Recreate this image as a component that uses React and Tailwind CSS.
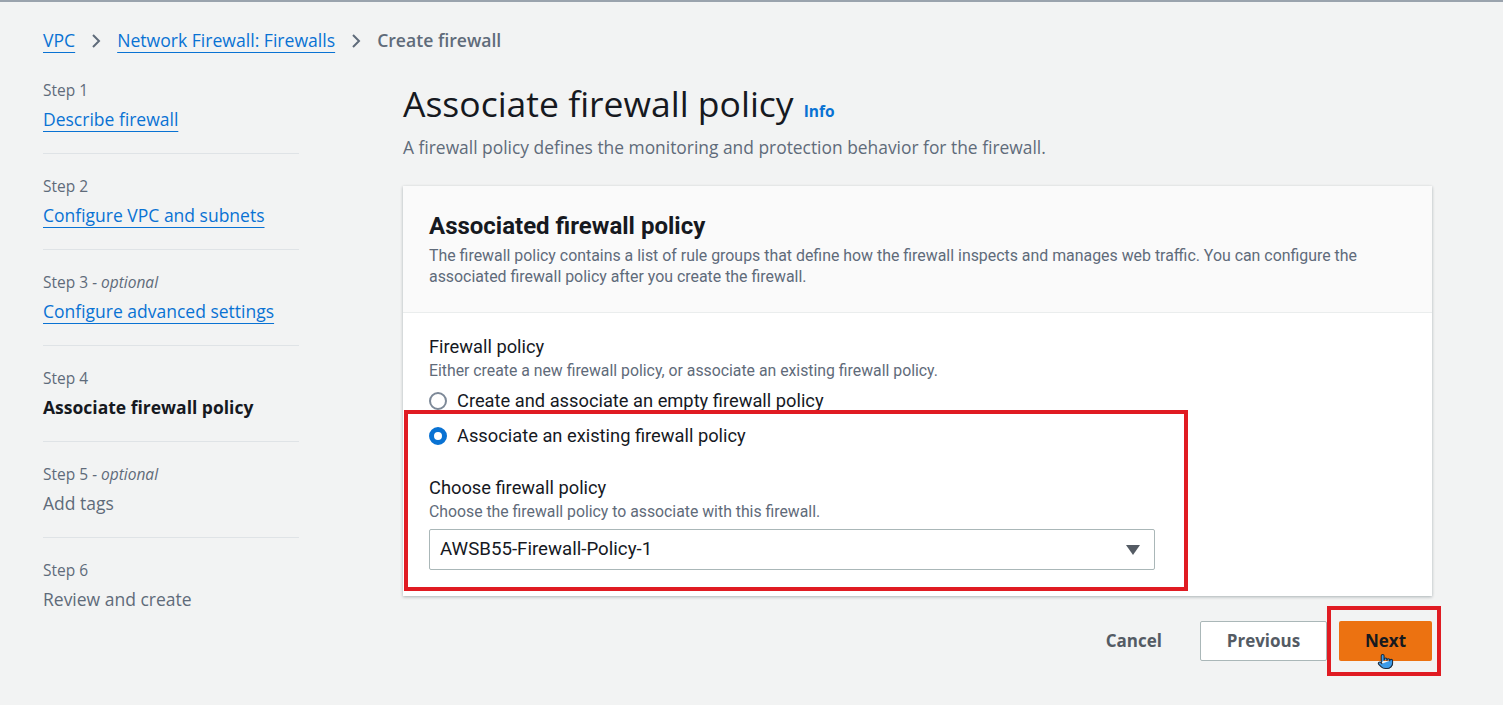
import React from "react";
import { Pointer } from "lucide-react";

const steps = [
  { label: "Step 1", title: "Describe firewall", state: "link" },
  { label: "Step 2", title: "Configure VPC and subnets", state: "link" },
  { label: "Step 3", optional: true, title: "Configure advanced settings", state: "link" },
  { label: "Step 4", title: "Associate firewall policy", state: "active" },
  { label: "Step 5", optional: true, title: "Add tags", state: "todo" },
  { label: "Step 6", title: "Review and create", state: "todo" },
];

function Chevron() {
  return (
    <svg width="14" height="16" viewBox="0 0 14 16" className="mx-[14px]">
      <path d="M4 2l6 6-6 6" fill="none" stroke="#5f6b7a" strokeWidth="2" />
    </svg>
  );
}

function Radio({ checked, label }) {
  return (
    <label className="flex items-center gap-[10px] h-[35px]">
      {checked ? (
        <span className="w-[18px] h-[18px] rounded-full border-[5px] border-[#0972d3] bg-white" />
      ) : (
        <span className="w-[18px] h-[18px] rounded-full border-2 border-[#7d8998] bg-white" />
      )}
      <span className="text-[18.3px] text-[#16191f]">{label}</span>
    </label>
  );
}

export default function App() {
  return (
    <div className="min-h-[705px] bg-[#f2f3f3] border-t-2 border-[#9aa3ad] font-['Open_Sans',sans-serif] relative">
      {/* breadcrumbs */}
      <div className="flex items-center pl-[43px] pt-[25px] h-[52px] text-[17.6px]">
        <span className="text-[#0972d3] underline underline-offset-[5px] decoration-1">VPC</span>
        <Chevron />
        <span className="text-[#0972d3] underline underline-offset-[5px] decoration-1">Network Firewall: Firewalls</span>
        <Chevron />
        <span className="text-[#5f6b7a] font-semibold">Create firewall</span>
      </div>

      <div className="flex mt-[24px]">
        {/* steps nav */}
        <nav className="w-[256px] ml-[43px] shrink-0 mt-[1px]">
          {steps.map((s, i) => (
            <div key={s.label} className={i > 0 ? "pt-[21px] pb-[22px] border-t border-[#dfe3e6]" : "pb-[22px]"}>
              <div className="text-[15.5px] text-[#5f6b7a] leading-[22px]">
                {s.label}
                {s.optional && <span className="italic"> - optional</span>}
              </div>
              <div
                className={`mt-[6px] text-[17.5px] leading-[24px] ${
                  s.state === "link"
                    ? "text-[#0972d3] underline underline-offset-[5px] decoration-1"
                    : s.state === "active"
                    ? "text-[#16191f] font-bold"
                    : "text-[#5f6b7a]"
                }`}
              >
                {s.title}
              </div>
            </div>
          ))}
        </nav>

        {/* main */}
        <main className="ml-[104px] w-[1029px]">
          <div className="flex items-baseline">
            <h1 className="text-[35.5px] leading-[50px] text-[#16191f]">Associate firewall policy</h1>
            <span className="ml-[10px] text-[15.5px] font-bold text-[#0972d3]">Info</span>
          </div>
          <p className="mt-[7px] text-[17.4px] leading-[24px] text-[#5f6b7a]">
            A firewall policy defines the monitoring and protection behavior for the firewall.
          </p>

          <section className="mt-[27px] bg-white shadow-[0_1px_3px_rgba(0,28,36,0.3)] font-['Roboto',sans-serif]">
            <div className="bg-[#fafafa] px-[26px] pt-[25px] h-[127px] border-b border-[#eaeded]">
              <h2 className="text-[24px] font-bold text-[#16191f] leading-[30px]">Associated firewall policy</h2>
              <p className="mt-[4px] text-[15.9px] leading-[21px] text-[#5f6b7a] max-w-[950px]">
                The firewall policy contains a list of rule groups that define how the firewall inspects and manages web traffic. You can configure the associated firewall policy after you create the firewall.
              </p>
            </div>
            <div className="px-[26px] pt-[22px] pb-[26px]">
              <div className="text-[18.3px] text-[#16191f] leading-[24px]">Firewall policy</div>
              <div className="text-[15.8px] text-[#5f6b7a] leading-[24px]">
                Either create a new firewall policy, or associate an existing firewall policy.
              </div>
              <div>
                <Radio label="Create and associate an empty firewall policy" />
                <Radio checked label="Associate an existing firewall policy" />
              </div>
              <div className="mt-[23px] text-[18.3px] text-[#16191f] leading-[24px]">Choose firewall policy</div>
              <div className="text-[15.8px] text-[#5f6b7a] leading-[24px]">
                Choose the firewall policy to associate with this firewall.
              </div>
              <div className="mt-[5px] w-[726px] h-[41px] border border-[#aab7b8] rounded-[2px] flex items-center justify-between pl-[10px] pr-[14px]">
                <span className="text-[18.7px] text-[#16191f]">AWSB55-Firewall-Policy-1</span>
                <svg width="14" height="10" viewBox="0 0 14 10">
                  <path d="M0 0h14L7 10z" fill="#545b64" />
                </svg>
              </div>
            </div>
          </section>

          <div className="flex justify-end items-center mt-[25px]">
            <button className="text-[17px] font-bold text-[#545b64] px-[20px] mr-[18px]">Cancel</button>
            <button className="w-[127px] h-[40px] bg-white border border-[#aab7b8] rounded-[2px] text-[17px] font-bold text-[#545b64]">
              Previous
            </button>
            <button className="ml-[12px] w-[93px] h-[40px] bg-[#ec7211] rounded-[2px] text-[17px] font-bold text-[#16191f]">
              Next
            </button>
          </div>
        </main>
      </div>

      {/* annotation boxes */}
      <div className="absolute left-[404px] top-[408px] w-[784px] h-[181px] border-4 border-[#e01b22]" />
      <div className="absolute left-[1327px] top-[604px] w-[114px] h-[70px] border-4 border-[#e01b22]" />
      <Pointer className="absolute left-[1377px] top-[651px] w-[17px] h-[17px] text-[#1f2937] fill-[#3b9be8]" strokeWidth={1.5} />
    </div>
  );
}
